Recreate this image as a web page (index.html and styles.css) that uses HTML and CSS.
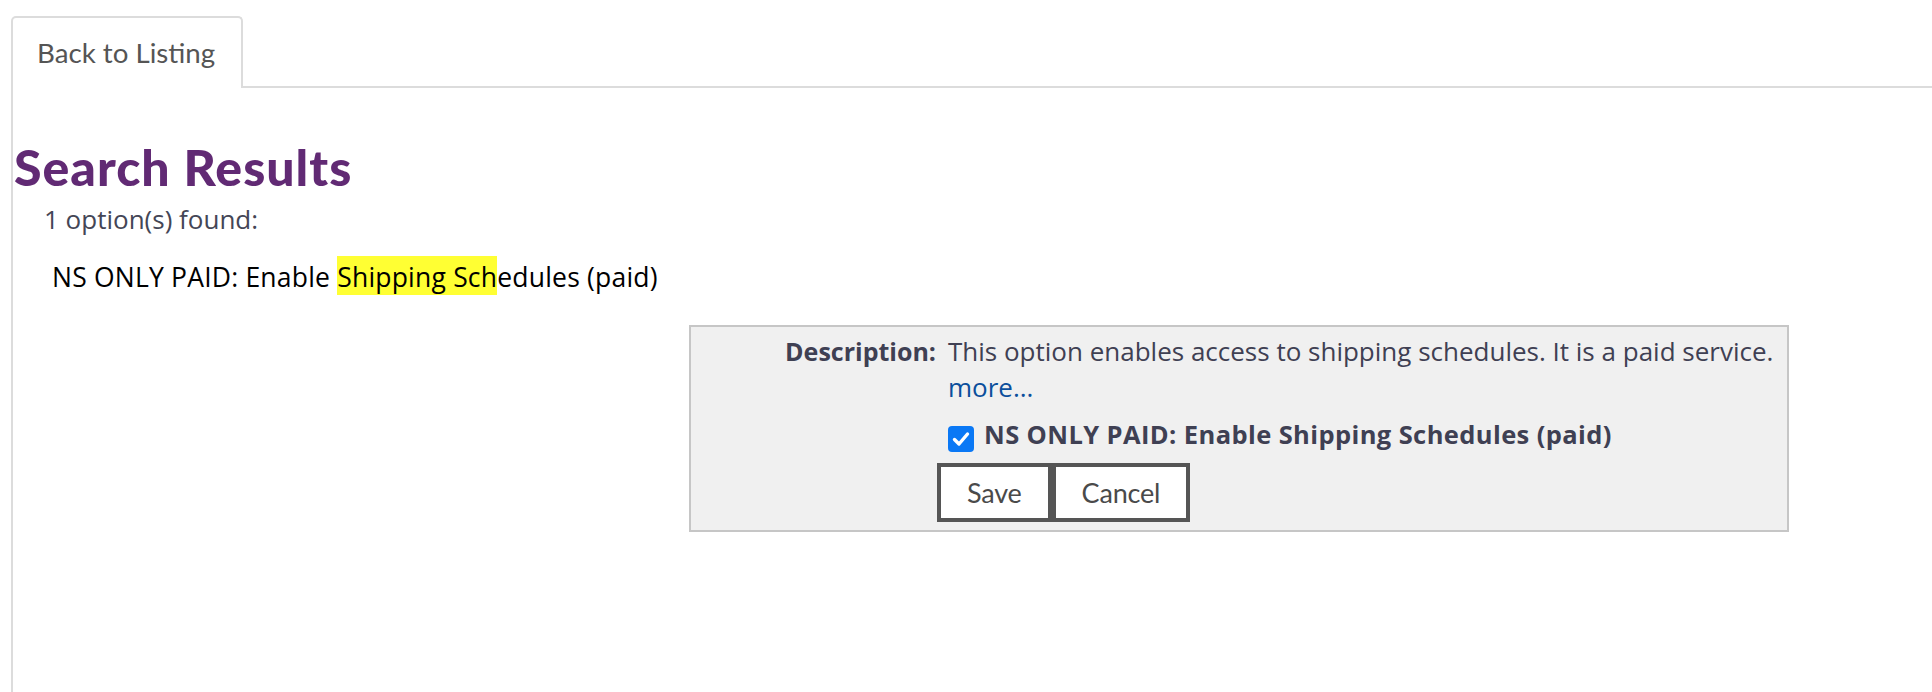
FILE: index.html
```html
<!DOCTYPE html>
<html lang="en">
<head>
<meta charset="utf-8">
<title>Search Results</title>
<link rel="stylesheet" href="styles.css">
</head>
<body>
<div class="tabs">
  <div class="tab">Back to Listing</div>
  <div class="tab-fill"></div>
</div>
<div class="pane">
  <h1 class="title">Search Results</h1>
  <p class="count">1 option(s) found:</p>
  <p class="result">NS ONLY PAID: Enable <mark class="hl">Shipping Sch</mark>edules (paid)</p>
  <div class="detail">
    <div class="label">Description:</div>
    <div class="value">
      <span class="desc">This option enables access to shipping schedules. It is a paid service.</span><br>
      <a class="more" href="#">more...</a>
    </div>
    <div class="spacer"></div>
    <label class="check">
      <span class="box"><svg viewBox="0 0 26 26" width="26" height="26"><path d="M6.5 13.5 L11 18 L19.5 8" fill="none" stroke="#fff" stroke-width="3.4" stroke-linecap="round" stroke-linejoin="round"/></svg></span>
      <span class="check-text">NS ONLY PAID: Enable Shipping Schedules (paid)</span>
    </label>
    <div class="spacer"></div>
    <div class="buttons">
      <button class="btn" type="button">Save</button><button class="btn" type="button">Cancel</button>
    </div>
  </div>
</div>
</body>
</html>
```

FILE: styles.css
```css
* { box-sizing: border-box; }
html, body { margin: 0; padding: 0; background: #fff; }
body { font-family: "Open Sans", "Liberation Sans", sans-serif; color: #3f4053; }

.tabs { display: flex; padding: 16px 0 0 11px; height: 88px; }
.tab {
  width: 232px;
  height: 72px;
  border: 2px solid #dcdcdc;
  border-bottom: none;
  border-radius: 5px 5px 0 0;
  padding-left: 24px;
  font-family: Lato, "Liberation Sans", sans-serif;
  font-size: 27.7px;
  line-height: 70px;
  color: #555;
  background: #fff;
}
.tab-fill { flex: 1; height: 72px; border-bottom: 2px solid #dcdcdc; }

.pane {
  margin-left: 11px;
  border-left: 2px solid #dcdcdc;
  height: calc(100vh - 88px);
  padding: 51px 0 0 1px;
}
.title {
  margin: 0;
  font-family: Lato, "Liberation Sans", sans-serif;
  font-size: 50px;
  line-height: 56px;
  font-weight: 900;
  letter-spacing: 1px;
  color: #612a74;
}
.count {
  margin: 9px 0 0 30px;
  font-size: 26px;
  line-height: 30px;
  color: #444656;
}
.result {
  margin: 25px 0 0 38px;
  font-size: 26.5px;
  line-height: 36px;
  letter-spacing: 0.2px;
  color: #000;
}
.hl { background: #ffff33; color: #000; padding: 3px 0 0; }

.detail {
  margin: 30px 0 0 675px;
  width: 1100px;
  border: 2px solid #c6c6c6;
  background: #f0f0f0;
  padding: 6px 0 8px;
  display: grid;
  grid-template-columns: 245px 1fr;
  column-gap: 12px;
  font-size: 25px;
  line-height: 36px;
}
.label { text-align: right; font-weight: 700; }
.value { font-size: 26px; }
.desc { white-space: nowrap; }
.more { color: #0b4f9c; text-decoration: none; }
.check {
  display: flex; align-items: flex-start; margin-top: 11px;
  font-weight: 700; font-size: 25.5px; letter-spacing: 0.4px;
}
.box {
  width: 26px; height: 26px; margin-top: 10px; margin-right: 10px;
  background: #0a78f5; border-radius: 4px; display: block; flex: none;
}
.box svg { display: block; }
.check-text { white-space: nowrap; }
.buttons { display: flex; margin: 11px 0 0 -11px; }
.btn {
  height: 59px;
  border: 4px solid #555;
  background: #fff;
  font-family: Lato, "Liberation Sans", sans-serif;
  font-size: 27px;
  letter-spacing: -0.2px;
  color: #4a4a4a;
  padding: 0 26px;
  margin: 0;
}
```
